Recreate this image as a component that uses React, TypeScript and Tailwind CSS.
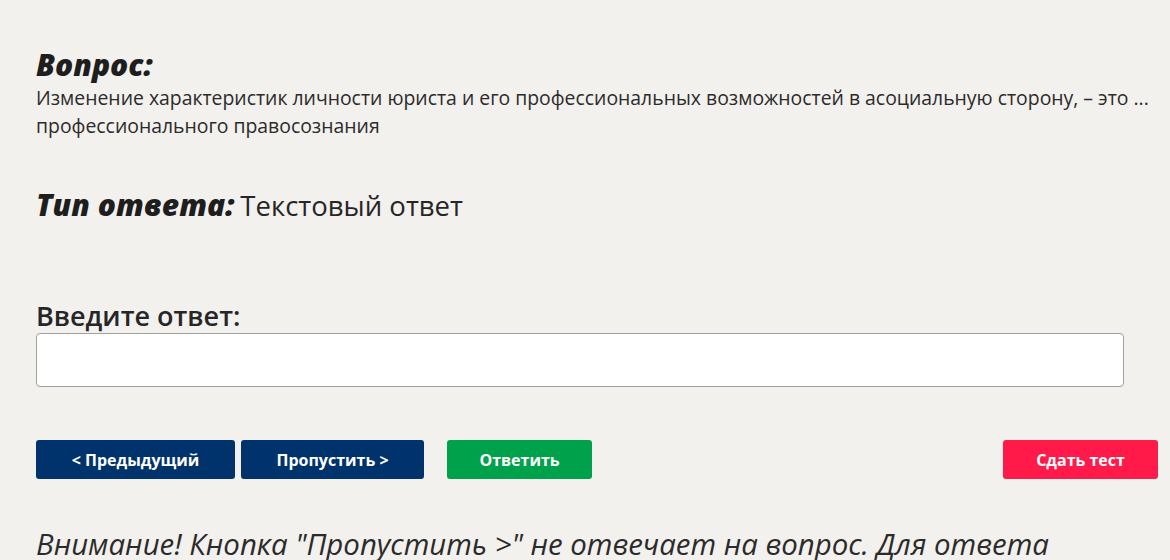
export default function App() {
  return (
    <div
      className="h-[560px] w-[1170px] overflow-hidden bg-[#f2f1ee] text-[#262626]"
      style={{ fontFamily: '"Open Sans", "Noto Sans", sans-serif' }}
    >
      <div className="pl-9 pr-3 pt-[46px]">
        {/* Question */}
        <h2 className="text-[30px] font-extrabold italic leading-[38px] text-[#1e1e1e]">Вопрос:</h2>
        <p className="text-[19.4px] leading-[28px] text-[#2b2b2b]">
          Изменение характеристик личности юриста и его профессиональных возможностей в асоциальную сторону, – это ...
          профессионального правосознания
        </p>

        {/* Answer type */}
        <div className="mt-[46px] flex items-baseline leading-[38px]">
          <span className="text-[30px] font-extrabold italic text-[#1e1e1e]">Тип ответа:</span>
          <span className="ml-[6px] text-[27.5px]">Текстовый ответ</span>
        </div>

        {/* Input */}
        <label className="mt-[74px] block text-[27px] font-semibold leading-[34px]">Введите ответ:</label>
        <input
          type="text"
          className="block h-[54px] w-[1088px] rounded-[4px] border border-[#a0a0a0] bg-white px-3 text-[17px] outline-none"
        />

        {/* Buttons */}
        <div className="mt-[53px] flex items-center">
          <button className="h-[39px] w-[199px] rounded-[3px] bg-[#00336b] text-[16px] font-bold text-white">
            &lt; Предыдущий
          </button>
          <button className="ml-[6px] h-[39px] w-[183px] rounded-[3px] bg-[#00336b] text-[16px] font-bold text-white">
            Пропустить &gt;
          </button>
          <button className="ml-[23px] h-[39px] w-[145px] rounded-[3px] bg-[#00a14b] text-[16px] font-bold text-white">
            Ответить
          </button>
          <button className="ml-auto h-[39px] w-[155px] rounded-[3px] bg-[#ff1a4a] text-[16px] font-bold text-white">
            Сдать тест
          </button>
        </div>

        {/* Notice */}
        <p className="mt-[46px] text-[29.4px] italic leading-[38px] text-[#2b2b2b]">
          Внимание! Кнопка "Пропустить &gt;" не отвечает на вопрос. Для ответа нажмите кнопку "Ответить".
        </p>
      </div>
    </div>
  )
}
